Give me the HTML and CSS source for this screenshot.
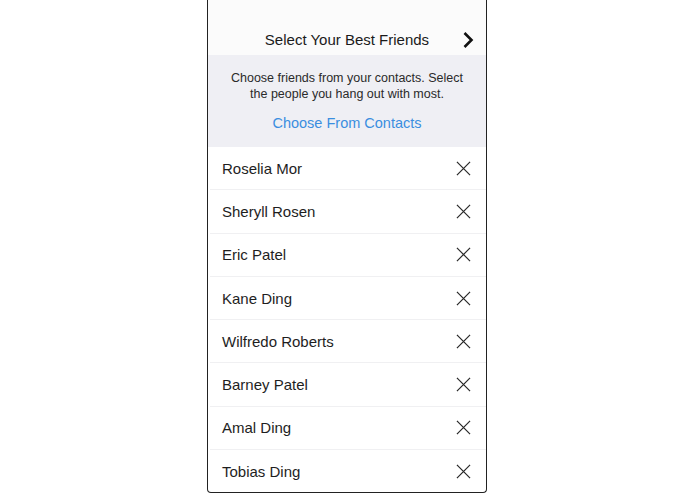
FILE: index.html
```html
<!DOCTYPE html>
<html lang="en">
  <head>
    <meta charset="UTF-8" />
    <link rel="stylesheet" href="styles.css">
    <title>Select Your Best Friends</title>
  </head>
  <body>
  <div id="phone">
    <div id="header">
      <span class="title">Select Your Best Friends</span>
      <svg class="next" width="12" height="18" viewBox="0 0 12 18"><path d="M2.5 2 L9.5 9 L2.5 16" fill="none" stroke="#111" stroke-width="2.6"/></svg>
    </div>
    <div id="intro">
      <p>Choose friends from your contacts. Select the people you hang out with most.</p>
      <a class="link">Choose From Contacts</a>
    </div>
    <ul id="friends">
      <li><span>Roselia Mor</span><svg class="remove" viewBox="0 0 16 16"><path d="M1 1 L15 15 M15 1 L1 15"/></svg></li>
      <li><span>Sheryll Rosen</span><svg class="remove" viewBox="0 0 16 16"><path d="M1 1 L15 15 M15 1 L1 15"/></svg></li>
      <li><span>Eric Patel</span><svg class="remove" viewBox="0 0 16 16"><path d="M1 1 L15 15 M15 1 L1 15"/></svg></li>
      <li><span>Kane Ding</span><svg class="remove" viewBox="0 0 16 16"><path d="M1 1 L15 15 M15 1 L1 15"/></svg></li>
      <li><span>Wilfredo Roberts</span><svg class="remove" viewBox="0 0 16 16"><path d="M1 1 L15 15 M15 1 L1 15"/></svg></li>
      <li><span>Barney Patel</span><svg class="remove" viewBox="0 0 16 16"><path d="M1 1 L15 15 M15 1 L1 15"/></svg></li>
      <li><span>Amal Ding</span><svg class="remove" viewBox="0 0 16 16"><path d="M1 1 L15 15 M15 1 L1 15"/></svg></li>
      <li><span>Tobias Ding</span><svg class="remove" viewBox="0 0 16 16"><path d="M1 1 L15 15 M15 1 L1 15"/></svg></li>
    </ul>
  </div>
</body>
</html>
```

FILE: styles.css
```css
* {
  box-sizing: border-box;
}
html, body {
  margin: 0;
  padding: 0;
  background: white;
  font-family: "Liberation Sans", Arial, sans-serif;
}

#phone {
  margin-left: 207px;
  width: 280px;
  height: 493px;
  border: 1.5px solid #222;
  border-top: none;
  border-radius: 0 0 4px 4px;
  background: white;
  overflow: hidden;
}

#header {
  height: 55px;
  background: #fbfbfb;
  display: flex;
  align-items: flex-end;
  justify-content: center;
  padding-bottom: 7px;
  position: relative;
}
#header .title {
  font-size: 15px;
  color: #1a1a1a;
}
#header .next {
  position: absolute;
  right: 12px;
  bottom: 6px;
}

#intro {
  height: 92px;
  background: #efeff4;
  text-align: center;
  padding: 15px 20px 0;
}
#intro p {
  margin: 0;
  font-size: 12.5px;
  line-height: 16px;
  color: #2a2a2a;
}
#intro .link {
  display: block;
  margin-top: 13px;
  font-size: 14.5px;
  color: #3a8ee0;
}

#friends {
  list-style: none;
  margin: 0;
  padding: 0;
}
#friends li {
  height: 43.3px;
  display: flex;
  align-items: center;
  justify-content: space-between;
  padding: 0 15px 0 12px;
  border-bottom: 1px solid #f0f0f2;
  margin-left: 2px;
  font-size: 15px;
  color: #1e1e1e;
}
#friends li:last-child {
  border-bottom: none;
}
.remove {
  width: 15px;
  height: 15px;
  fill: none;
  stroke: #2a2a2a;
  stroke-width: 1.3;
}
```
